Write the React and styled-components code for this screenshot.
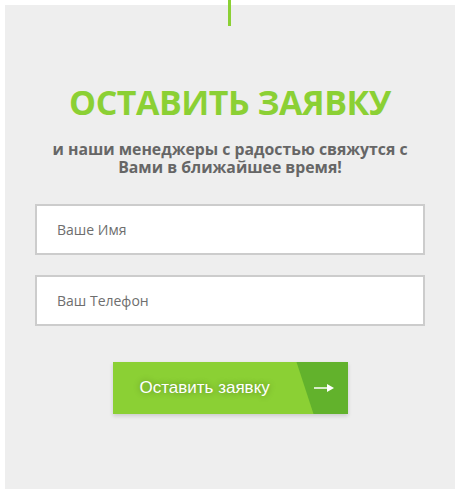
import styled, { createGlobalStyle } from "styled-components";

const GlobalStyle = createGlobalStyle`
    html, body {
        margin: 0;
        padding: 0;
        background: #ffffff;
    }
    * {
        box-sizing: border-box;
    }
`;

const StyledPage = styled.div`
    padding: 5px;
`;
const StyledPanel = styled.div`
    position: relative;
    height: 484px;
    background: #eeeeee;
    display: flex;
    flex-direction: column;
    align-items: center;
    padding-top: 77px;
`;
const StyledLine = styled.span`
    position: absolute;
    top: -5px;
    left: 223px;
    width: 3px;
    height: 26px;
    background: #8bd034;
`;
const StyledTitle = styled.h2`
    margin: 0;
    font-family: "Open Sans", sans-serif;
    font-size: 34px;
    font-weight: 700;
    line-height: 40px;
    color: #8bd034;
    letter-spacing: -0.5px;
`;
const StyledSubtitle = styled.p`
    margin: 18px 0 0;
    width: 390px;
    font-family: "Open Sans", sans-serif;
    font-size: 15.8px;
    font-weight: 700;
    line-height: 18px;
    color: #666666;
    text-align: center;
`;
const StyledForm = styled.form`
    margin-top: 28px;
    width: 390px;
    display: flex;
    flex-direction: column;
    align-items: center;
    gap: 20px;
`;
const StyledInput = styled.input`
    width: 100%;
    height: 51px;
    border: 2px solid #cccccc;
    background: #ffffff;
    padding: 0 20px;
    font-family: "Open Sans", sans-serif;
    font-size: 14px;
    color: #666666;
    outline: none;

    &::placeholder {
        color: #6e6e6e;
    }
`;
const StyledButton = styled.button`
    margin-top: 16px;
    width: 235px;
    height: 52px;
    border: none;
    padding: 0;
    display: flex;
    align-items: stretch;
    background: #62b22c;
    box-shadow: 0 2px 4px rgba(0, 0, 0, 0.15);
    cursor: pointer;
    overflow: hidden;
`;
const StyledButtonLabel = styled.span`
    flex: 1;
    display: flex;
    align-items: center;
    padding-left: 27px;
    background: #8bd034;
    clip-path: polygon(0 0, 184px 0, 201px 100%, 0 100%);
    font-family: "Liberation Sans", Arial, sans-serif;
    font-size: 17px;
    color: #ffffff;
    text-shadow: 0 0 6px rgba(0, 0, 0, 0.35);
`;
const StyledArrow = styled.span`
    width: 34px;
    display: flex;
    align-items: center;
    justify-content: flex-start;
`;

const App = () => {
    return (
        <>
            <GlobalStyle />
            <StyledPage>
                <StyledPanel>
                    <StyledLine />
                    <StyledTitle>ОСТАВИТЬ ЗАЯВКУ</StyledTitle>
                    <StyledSubtitle>
                        и наши менеджеры с радостью свяжутся с Вами в ближайшее время!
                    </StyledSubtitle>
                    <StyledForm onSubmit={(e) => e.preventDefault()}>
                        <StyledInput type="text" placeholder="Ваше Имя" />
                        <StyledInput type="tel" placeholder="Ваш Телефон" />
                        <StyledButton type="submit">
                            <StyledButtonLabel>Оставить заявку</StyledButtonLabel>
                            <StyledArrow>
                                <svg width="20" height="10" viewBox="0 0 20 10">
                                    <path d="M0 5H14" stroke="#ffffff" strokeWidth="1.5" />
                                    <path d="M13 1L20 5L13 9Z" fill="#ffffff" />
                                </svg>
                            </StyledArrow>
                        </StyledButton>
                    </StyledForm>
                </StyledPanel>
            </StyledPage>
        </>
    );
};

export default App;
